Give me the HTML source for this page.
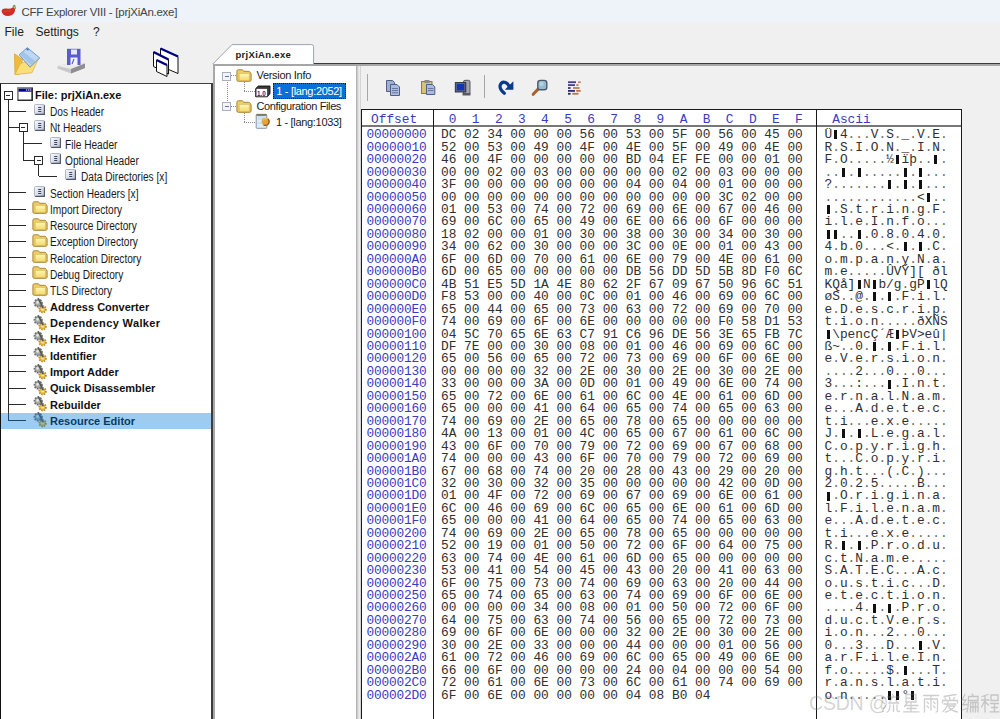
<!DOCTYPE html>
<html><head><meta charset="utf-8"><style>
*{margin:0;padding:0;box-sizing:border-box}
html,body{width:1000px;height:719px;overflow:hidden;background:#f0f0f0;position:relative;font-family:"Liberation Sans",sans-serif}
div,svg{position:absolute}
.bx{width:9px;height:9px;border:1px solid #2a2a2a;background:#fff}
.mn{left:1.5px;top:3px;width:4px;height:1px;background:#2a2a2a}
.rbx{width:9px;height:9px;border:1px solid #a8b0bc;background:#f2f4f8}
.rbx div{left:1.5px;top:3px;width:4px;height:1.2px;background:#5878a8}
.tr{font-size:12px;letter-spacing:0;transform:scaleX(0.845);transform-origin:0 0;line-height:15px;color:#1a1a1a;white-space:nowrap}
.rt{font-size:11px;line-height:15px;color:#1a1a1a;white-space:nowrap}
.tb{font-size:11.5px;font-weight:bold;transform:scaleX(0.958);transform-origin:0 0;line-height:15px;color:#111;white-space:nowrap}
.mono{font-family:"Liberation Mono",monospace;font-size:12.83px;line-height:12.46px;white-space:pre;color:#303030}
.off,.hd{color:#3a3ac4}
.off{letter-spacing:-0.2px}
.hx b{font-weight:normal;color:#6a6a6a}
.mono i{display:inline-block;width:7.7px;height:10px;position:relative;vertical-align:-1px}
.mono i:after{content:"";position:absolute;left:2px;top:0.5px;width:2.6px;height:9px;background:#000}
</style></head><body>

<svg width="0" height="0" style="position:absolute">
<defs>
<linearGradient id="gdoc" x1="0" y1="0" x2="1" y2="1"><stop offset="0" stop-color="#f8f9fd"/><stop offset="0.7" stop-color="#d0d6e4"/><stop offset="1" stop-color="#a4aec4"/></linearGradient>
<linearGradient id="gfold" x1="0" y1="0" x2="0" y2="1"><stop offset="0" stop-color="#fff8b8"/><stop offset="1" stop-color="#f2d86e"/></linearGradient>
<linearGradient id="gsel" x1="0" y1="0" x2="0" y2="1"><stop offset="0" stop-color="#a8d2f2"/><stop offset="1" stop-color="#94c4ec"/></linearGradient>
<symbol id="doc" viewBox="0 0 11 11"><rect x="0.5" y="0.5" width="10" height="10" rx="1" fill="url(#gdoc)" stroke="#a9b1c2" stroke-width="0.9"/><path d="M10.4 1.2 V10.4 H1.2" fill="none" stroke="#4e5566" stroke-width="1.1"/><rect x="4" y="3" width="3.4" height="1" rx="0.4" fill="#3e4760"/><rect x="4" y="5" width="3.4" height="1" rx="0.4" fill="#3e4760"/><rect x="4" y="7" width="3.4" height="1" rx="0.4" fill="#3e4760"/></symbol>
<symbol id="fold" viewBox="0 0 16 13"><path d="M0.9 2.3 Q0.9 0.8 2.4 0.8 H6.3 L7.9 2.3 H12.4 Q13.8 2.3 14.4 3.6 L15.1 5 V11 Q15.1 12.3 13.7 12.3 H2.3 Q0.9 12.3 0.9 11 Z" fill="#ecce6a" stroke="#a88432" stroke-width="1"/><path d="M3.2 4.4 H13.4 V11.6 H3.2 Z" fill="url(#gfold)" stroke="#caa648" stroke-width="0.5"/></symbol>
<symbol id="gear" viewBox="0 0 15 16"><circle cx="9.6" cy="11.2" r="3.3" fill="#e6c04a" stroke="#c08a22" stroke-width="1.8" stroke-dasharray="1.4 1.1"/><circle cx="9.6" cy="11.2" r="1.2" fill="#f4e8a0"/><circle cx="5.2" cy="5" r="3.7" fill="#a8a8a8" stroke="#707070" stroke-width="1.9" stroke-dasharray="1.6 1.1"/><circle cx="4.6" cy="4.4" r="1.3" fill="#e8e8e8"/><path d="M5.6 1 L10 9.8" stroke="#4e5a4e" stroke-width="1.5" stroke-linecap="round"/></symbol>
</defs></svg>
<div style="left:0;top:0;width:1000px;height:21.5px;background:#eef2f9"></div>
<svg style="left:0px;top:0px" width="18" height="18" viewBox="0 0 18 18"><path d="M1.6 11.2 Q2 8 6.5 8.6 Q10.5 9.2 13.2 7.2 Q15.6 7.8 14.8 11.2 Q13.6 15.6 8.2 15.9 Q2.4 16 1.6 11.2 Z" fill="#d02a22"/><path d="M3 12 Q7 10.5 12 11" stroke="#e84a3a" stroke-width="1.2" fill="none" opacity="0.6"/><path d="M13 7.6 Q13.2 5.6 14.6 5.4 Q15.4 6.5 15.2 9" stroke="#6a9040" stroke-width="1.1" fill="none"/></svg>
<div style="left:21.5px;top:5.6px;font-size:11.5px;letter-spacing:-0.26px;color:#444;white-space:nowrap">CFF Explorer VIII - [prjXiAn.exe]</div>
<div style="left:4.5px;top:24.5px;font-size:12px;color:#222;white-space:nowrap">File</div>
<div style="left:35.5px;top:24.5px;font-size:12px;color:#222;white-space:nowrap">Settings</div>
<div style="left:93px;top:24.5px;font-size:12px;color:#222;white-space:nowrap">?</div>

<!-- open folder -->
<svg style="left:10px;top:44px" width="34" height="34" viewBox="10 44 34 34">
<path d="M14.5 53.8 L22.5 59.5 L19 74.5 L15 74.5 Z" fill="#eebb40" stroke="#d8a430" stroke-width="0.8"/>
<path d="M15 74.5 L20.5 63.5 L38.5 58.2 L32 72.8 Z" fill="#fbe07a" stroke="#dcb448" stroke-width="0.8"/>
<path d="M27.3 47.6 L39.8 58 L30 67.2 L19.2 54.8 Z" fill="#b4d4f6" fill-opacity="0.85" stroke="#6f8fb8" stroke-width="0.9"/>
<path d="M23 51.5 L35.5 61.5 L31.5 65 L20.5 55 Z" fill="#94bcea" fill-opacity="0.7"/>
<path d="M26.5 48.5 L28.5 50.2" stroke="#3a70c0" stroke-width="1.6"/>
</svg>
<!-- save -->
<svg style="left:54px;top:44px" width="36" height="34" viewBox="54 44 36 34">
<path d="M57.5 66 L70 63 L85 63.5 L85 68 L71 73.5 L57.5 68.5 Z" fill="#c9c9c9"/>
<path d="M57.5 66 L70 63 L85 63.5 L71 69 Z" fill="#ececec"/>
<path d="M71 69 L85 63.5 L85 68 L71 73.5 Z" fill="#8f8f8f"/>
<rect x="67" y="48.8" width="13.5" height="16.2" fill="#5b5bd0"/>
<rect x="71" y="49.5" width="6" height="5" fill="#e8e8f0"/>
<rect x="70.5" y="57.5" width="7" height="7.5" fill="#f4f4f8"/>
<path d="M72 64 L74 59" stroke="#5b5bd0" stroke-width="1.2"/>
</svg>
<!-- windows -->
<svg style="left:148px;top:44px" width="36" height="36" viewBox="148 44 36 36">
<path d="M160.5 48.5 L178 56.5 L178 73.5 L160.5 66 Z" fill="#fff" stroke="#111" stroke-width="1"/>
<path d="M160.5 48.5 L178 56.5" stroke="#000080" stroke-width="2.4"/>
<path d="M153.5 52 L168.5 59.5 L168.5 74 L153.5 66.5 Z" fill="#fff" stroke="#111" stroke-width="1"/>
<path d="M153.5 52 L168.5 59.5" stroke="#000080" stroke-width="2.4"/>
<path d="M156.5 60 L167 65 L167 76.5 L156.5 71.5 Z" fill="#fff" stroke="#111" stroke-width="1"/>
<path d="M156.5 60 L167 65" stroke="#000080" stroke-width="2.4"/>
</svg>

<!-- left tree panel -->
<div style="left:0;top:82.7px;width:213px;height:637px;background:#fff;border-top:1.5px solid #404040;border-left:1.2px solid #111;border-right:2px solid #3c3c3c"></div>
<div style="left:7.699999999999999px;top:99.1px;width:1px;height:322.1px;background:#2a2a2a"></div>
<div style="left:8.2px;top:110.88px;width:17.8px;height:1px;background:#2a2a2a"></div>
<div style="left:8.2px;top:127.16px;width:17.8px;height:1px;background:#2a2a2a"></div>
<div style="left:23px;top:143.44px;width:19px;height:1px;background:#2a2a2a"></div>
<div style="left:23px;top:159.72px;width:19px;height:1px;background:#2a2a2a"></div>
<div style="left:38.5px;top:176.0px;width:18.5px;height:1px;background:#2a2a2a"></div>
<div style="left:8.2px;top:192.28px;width:17.8px;height:1px;background:#2a2a2a"></div>
<div style="left:8.2px;top:208.56px;width:17.8px;height:1px;background:#2a2a2a"></div>
<div style="left:8.2px;top:224.84px;width:17.8px;height:1px;background:#2a2a2a"></div>
<div style="left:8.2px;top:241.12px;width:17.8px;height:1px;background:#2a2a2a"></div>
<div style="left:8.2px;top:257.4px;width:17.8px;height:1px;background:#2a2a2a"></div>
<div style="left:8.2px;top:273.68px;width:17.8px;height:1px;background:#2a2a2a"></div>
<div style="left:8.2px;top:289.96000000000004px;width:17.8px;height:1px;background:#2a2a2a"></div>
<div style="left:8.2px;top:306.24px;width:17.8px;height:1px;background:#2a2a2a"></div>
<div style="left:8.2px;top:322.52px;width:17.8px;height:1px;background:#2a2a2a"></div>
<div style="left:8.2px;top:338.8px;width:17.8px;height:1px;background:#2a2a2a"></div>
<div style="left:8.2px;top:355.08000000000004px;width:17.8px;height:1px;background:#2a2a2a"></div>
<div style="left:8.2px;top:371.36px;width:17.8px;height:1px;background:#2a2a2a"></div>
<div style="left:8.2px;top:387.64px;width:17.8px;height:1px;background:#2a2a2a"></div>
<div style="left:8.2px;top:403.9200000000001px;width:17.8px;height:1px;background:#2a2a2a"></div>
<div style="left:8.2px;top:420.20000000000005px;width:17.8px;height:1px;background:#2a2a2a"></div>
<div style="left:22.5px;top:131.66px;width:1px;height:28.560000000000002px;background:#2a2a2a"></div>
<div style="left:38.0px;top:164.22px;width:1px;height:12.280000000000001px;background:#2a2a2a"></div>
<div class="bx" style="left:3.6999999999999993px;top:90.6px"><div class="mn"></div></div>
<div class="bx" style="left:18.5px;top:123.16px"><div class="mn"></div></div>
<div class="bx" style="left:34.0px;top:155.72px"><div class="mn"></div></div>
<svg style="left:17px;top:87.1px" width="16" height="14" viewBox="0 0 16 14"><rect x="0" y="0" width="16" height="14" rx="0.8" fill="#8a8a8a"/><path d="M15.2 0.8 V13.2 H0.8" fill="none" stroke="#2e2e2e" stroke-width="1.6"/><rect x="1.6" y="1.8" width="12.6" height="2.6" fill="#00008e"/><circle cx="9.6" cy="3.1" r="0.75" fill="#c8d0ff"/><circle cx="11.6" cy="3.1" r="0.75" fill="#c8d0ff"/><circle cx="13.4" cy="3.1" r="0.75" fill="#c8d0ff"/><rect x="1.8" y="5" width="12.4" height="7.4" fill="#fff"/></svg>
<div class="tb" style="left:35px;top:88.19999999999999px">File: prjXiAn.exe</div>
<svg style="left:34px;top:104.17999999999999px" width="11" height="11"><use href="#doc" width="11" height="11"/></svg>
<div class="tr" style="left:50px;top:105.17999999999999px">Dos Header</div>
<svg style="left:34px;top:120.46px" width="11" height="11"><use href="#doc" width="11" height="11"/></svg>
<div class="tr" style="left:50px;top:121.46px">Nt Headers</div>
<svg style="left:50px;top:136.74px" width="11" height="11"><use href="#doc" width="11" height="11"/></svg>
<div class="tr" style="left:65px;top:137.74px">File Header</div>
<svg style="left:50px;top:153.02px" width="11" height="11"><use href="#doc" width="11" height="11"/></svg>
<div class="tr" style="left:65px;top:154.02px">Optional Header</div>
<svg style="left:65px;top:169.3px" width="11" height="11"><use href="#doc" width="11" height="11"/></svg>
<div class="tr" style="left:81px;top:170.3px">Data Directories [x]</div>
<svg style="left:34px;top:185.58px" width="11" height="11"><use href="#doc" width="11" height="11"/></svg>
<div class="tr" style="left:50px;top:186.58px">Section Headers [x]</div>
<svg style="left:32.2px;top:201.26px" width="16" height="13"><use href="#fold" width="16" height="13"/></svg>
<div class="tr" style="left:50px;top:202.86px">Import Directory</div>
<svg style="left:32.2px;top:217.54px" width="16" height="13"><use href="#fold" width="16" height="13"/></svg>
<div class="tr" style="left:50px;top:219.14000000000001px">Resource Directory</div>
<svg style="left:32.2px;top:233.82px" width="16" height="13"><use href="#fold" width="16" height="13"/></svg>
<div class="tr" style="left:50px;top:235.42000000000002px">Exception Directory</div>
<svg style="left:32.2px;top:250.09999999999997px" width="16" height="13"><use href="#fold" width="16" height="13"/></svg>
<div class="tr" style="left:50px;top:251.7px">Relocation Directory</div>
<svg style="left:32.2px;top:266.38px" width="16" height="13"><use href="#fold" width="16" height="13"/></svg>
<div class="tr" style="left:50px;top:267.98px">Debug Directory</div>
<svg style="left:32.2px;top:282.66px" width="16" height="13"><use href="#fold" width="16" height="13"/></svg>
<div class="tr" style="left:50px;top:284.26000000000005px">TLS Directory</div>
<svg style="left:32.5px;top:298.44px" width="15" height="16"><use href="#gear" width="15" height="16"/></svg>
<div class="tb" style="left:50px;top:299.84000000000003px">Address Converter</div>
<svg style="left:32.5px;top:314.71999999999997px" width="15" height="16"><use href="#gear" width="15" height="16"/></svg>
<div class="tb" style="left:50px;top:316.12px;letter-spacing:0.38px">Dependency Walker</div>
<svg style="left:32.5px;top:331.0px" width="15" height="16"><use href="#gear" width="15" height="16"/></svg>
<div class="tb" style="left:50px;top:332.40000000000003px">Hex Editor</div>
<svg style="left:32.5px;top:347.28000000000003px" width="15" height="16"><use href="#gear" width="15" height="16"/></svg>
<div class="tb" style="left:50px;top:348.68000000000006px">Identifier</div>
<svg style="left:32.5px;top:363.56px" width="15" height="16"><use href="#gear" width="15" height="16"/></svg>
<div class="tb" style="left:50px;top:364.96000000000004px">Import Adder</div>
<svg style="left:32.5px;top:379.84px" width="15" height="16"><use href="#gear" width="15" height="16"/></svg>
<div class="tb" style="left:50px;top:381.24px">Quick Disassembler</div>
<svg style="left:32.5px;top:396.12000000000006px" width="15" height="16"><use href="#gear" width="15" height="16"/></svg>
<div class="tb" style="left:50px;top:397.5200000000001px">Rebuilder</div>
<svg style="left:32.5px;top:412.40000000000003px" width="15" height="16"><use href="#gear" width="15" height="16"/></svg>
<div class="tb" style="left:50px;top:413.80000000000007px">Resource Editor</div>
<div style="left:1.2px;top:412.90000000000003px;width:209.8px;height:15.8px;background:rgba(0,120,215,0.38)"></div>

<!-- tab -->
<svg style="left:212px;top:43px" width="104" height="23" viewBox="212 43 104 23"><path d="M212.8 64 L232 44.6 H311.5 Q313.6 44.6 313.6 46.7 V64" fill="#fff" stroke="#9aa4b4" stroke-width="1"/></svg>
<div style="left:235.5px;top:48.5px;font-size:9.5px;font-weight:bold;letter-spacing:0.3px;color:#1a1a1a;white-space:nowrap">prjXiAn.exe</div>
<div style="left:313.5px;top:63px;width:687px;height:1px;background:#3a3a3a"></div>
<div style="left:213px;top:64.3px;width:787px;height:2.2px;background:#a6a6a6"></div>

<!-- resource tree panel -->
<div style="left:213px;top:66px;width:143px;height:653px;background:#fff;border-left:2px solid #a8a8a8"></div>
<div style="left:355.8px;top:66px;width:5px;height:653px;background:linear-gradient(90deg,#a4a4a4,#dcdcdc 40%,#ececec 70%,#c8c8c8)"></div>

<div style="left:226.5px;top:80px;width:0;height:22.5px;border-left:1px dotted #8a8a8a"></div>
<div style="left:231px;top:75px;width:5px;height:0;border-top:1px dotted #8a8a8a"></div>
<div style="left:231px;top:106px;width:5px;height:0;border-top:1px dotted #8a8a8a"></div>
<div style="left:244px;top:82px;width:0;height:9px;border-left:1px dotted #8a8a8a"></div>
<div style="left:244px;top:91px;width:11px;height:0;border-top:1px dotted #8a8a8a"></div>
<div style="left:244px;top:113px;width:0;height:9px;border-left:1px dotted #8a8a8a"></div>
<div style="left:244px;top:122px;width:11px;height:0;border-top:1px dotted #8a8a8a"></div>
<div class="rbx" style="left:222px;top:71.5px"><div></div></div>
<div class="rbx" style="left:222px;top:102px"><div></div></div>
<svg style="left:236px;top:69px" width="16" height="13"><use href="#fold" width="16" height="13"/></svg>
<svg style="left:236px;top:99.5px" width="16" height="13"><use href="#fold" width="16" height="13"/></svg>
<div class="rt" style="left:256.5px;top:68px;letter-spacing:-0.3px">Version Info</div>
<div class="rt" style="left:256.5px;top:99px;letter-spacing:-0.38px">Configuration Files</div>
<svg style="left:255px;top:85px" width="16" height="13" viewBox="0 0 16 13"><path d="M0.7 3.6 L3.3 1 H15 V8.6 L12.4 11.8 H0.7 Z" fill="#3a3a3a" stroke="#111" stroke-width="0.9"/><rect x="1.5" y="3.9" width="10.6" height="7.3" fill="#fff"/><text x="2" y="10.5" font-family="Liberation Sans" font-size="6.3" font-weight="bold" fill="#1a2a9a">1.0</text></svg>
<div style="left:273px;top:83.3px;width:72.7px;height:15.3px;background:#0b6fd5;border:1px dotted #1a1a40"></div>
<div class="rt" style="left:276.3px;top:84px;color:#fff;letter-spacing:-0.32px">1 - [lang:2052]</div>
<svg style="left:255px;top:113px" width="16" height="17" viewBox="0 0 16 17"><rect x="1.2" y="1.3" width="10.6" height="14" rx="0.8" fill="#dcecf8" stroke="#8a94a2" stroke-width="1"/><rect x="1.5" y="1.3" width="10" height="1.5" fill="#6a6a50"/><path d="M2.5 4 H10 M2.5 6 H8 M2.5 10 H8" stroke="#b8d0e4" stroke-width="0.8"/><circle cx="10.6" cy="8.6" r="3.9" fill="#e6a23c"/><path d="M13.2 5.8 Q15.4 9.5 12.4 11.8 Q10.6 13 8.5 12" stroke="#8a5a20" stroke-width="1.3" fill="none"/><path d="M8.2 7.2 Q9.5 5.5 11.5 5.6" stroke="#f6d08a" stroke-width="1" fill="none"/></svg>
<div class="rt" style="left:276px;top:115px;letter-spacing:-0.32px">1 - [lang:1033]</div>


<!-- hex panel -->

<div style="left:366.5px;top:74px;width:1px;height:27px;background:#a6a6a6"></div>
<div style="left:484px;top:75px;width:1px;height:23px;background:#a6a6a6"></div>
<!-- copy -->
<svg style="left:384px;top:78px" width="18" height="20" viewBox="384 78 18 20">
<path d="M386.5 80.5 H392.5 L394.5 82.5 V91.5 H386.5 Z" fill="#9db0d4" stroke="#4f5f88"/>
<path d="M390.5 84.5 H397 L399.5 87 V95.5 H390.5 Z" fill="#a9bbde" stroke="#4f5f88"/>
<rect x="392" y="88" width="6" height="0.8" fill="#5a6a90"/><rect x="392" y="90.2" width="6" height="0.8" fill="#5a6a90"/><rect x="392" y="92.4" width="6" height="0.8" fill="#5a6a90"/>
</svg>
<!-- paste -->
<svg style="left:419px;top:78px" width="18" height="20" viewBox="419 78 18 20">
<rect x="421.5" y="81.5" width="10.5" height="12" fill="#d8c470" stroke="#8e7e38"/>
<rect x="424.5" y="80" width="5" height="3" fill="#8a8a8a"/>
<path d="M426.5 84.5 H432.5 L434.8 86.8 V94.5 H426.5 Z" fill="#a9bbde" stroke="#4f5f88"/>
<rect x="428" y="88" width="5.5" height="0.8" fill="#5a6a90"/><rect x="428" y="90.2" width="5.5" height="0.8" fill="#5a6a90"/>
</svg>
<!-- monitor -->
<svg style="left:453px;top:78px" width="20" height="20" viewBox="453 78 20 20">
<path d="M463.5 81.8 Q463.5 80.3 465 80.3 H468.5 Q470 80.3 470 81.8 V93.5 H463.5 Z" fill="#a4a4b0" stroke="#4a4a56" stroke-width="0.9"/>
<rect x="462.5" y="93" width="8" height="2.6" rx="0.6" fill="#5a5a66"/>
<rect x="455.3" y="82.6" width="10.5" height="9.4" fill="#6a6a78" stroke="#262630" stroke-width="0.9"/>
<rect x="456.8" y="84" width="7.5" height="6.4" fill="#1434b8"/>
</svg>
<!-- redo -->
<svg style="left:494px;top:76px" width="24" height="22" viewBox="494 76 24 22">
<path d="M504.3 93.2 Q499.2 89 500.2 85.2 Q501.8 81.2 505.5 82.5 Q508 83.5 509.5 87" fill="none" stroke="#0b3a8a" stroke-width="3.2" stroke-linecap="round"/>
<path d="M513.4 81.2 L513.4 89.8 L504.8 89.8 Z" fill="#0b3a8a"/>
</svg>
<!-- magnifier -->
<svg style="left:530px;top:78px" width="20" height="20" viewBox="530 78 20 20">
<path d="M533.2 94.3 L538.6 88.6" stroke="#a8622e" stroke-width="3" stroke-linecap="round"/>
<rect x="537.8" y="80.4" width="9" height="9.4" rx="2.6" fill="#94bccc" stroke="#4a5a70" stroke-width="1.4"/>
<rect x="539.5" y="82" width="4" height="4" rx="1.5" fill="#b4d4dc"/>
</svg>
<!-- list -->
<svg style="left:566px;top:79px" width="18" height="17" viewBox="566 79 18 17">
<rect x="568" y="81.3" width="8" height="1.8" fill="#46408e"/><rect x="578" y="81.3" width="2.8" height="1.8" fill="#c08a70"/>
<rect x="568" y="84.2" width="7" height="1.8" fill="#46408e"/><rect x="576.3" y="84.2" width="2.2" height="1.8" fill="#c07858"/>
<rect x="568" y="87.1" width="2.6" height="1.8" fill="#3a3478"/><rect x="573" y="87.1" width="6.6" height="1.8" fill="#b88060"/>
<rect x="568" y="90" width="7" height="1.8" fill="#2e2a80"/><rect x="576.2" y="90" width="4.5" height="1.8" fill="#d07040"/>
<rect x="568" y="92.9" width="2.6" height="1.8" fill="#2a2a60"/><rect x="572.3" y="92.9" width="6.2" height="1.8" fill="#b07850"/>
</svg>

<div style="left:361px;top:108.8px;width:601px;height:611px;background:#fff;border:1.2px solid #1a1a1a;border-bottom:none"></div>
<div style="left:362px;top:125px;width:599px;height:1.6px;background:#777"></div>
<div style="left:432.8px;top:110px;width:1.3px;height:609px;background:#1a1a1a"></div>
<div style="left:816px;top:110px;width:1.3px;height:609px;background:#1a1a1a"></div>
<div class="mono off" style="left:366.5px;top:129.26999999999998px">00000000
00000010
00000020
00000030
00000040
00000050
00000060
00000070
00000080
00000090
000000A0
000000B0
000000C0
000000D0
000000E0
000000F0
00000100
00000110
00000120
00000130
00000140
00000150
00000160
00000170
00000180
00000190
000001A0
000001B0
000001C0
000001D0
000001E0
000001F0
00000200
00000210
00000220
00000230
00000240
00000250
00000260
00000270
00000280
00000290
000002A0
000002B0
000002C0
000002D0</div>
<div class="mono hx" style="left:441px;top:129.26999999999998px">DC 02 34 00 00 00 56 00 53 00 5F 00 56 00 45 00
52 00 53 00 49 00 4F 00 4E 00 5F 00 49 00 4E 00
46 00 4F 00 00 00 00 00 BD 04 EF FE 00 00 01 00
00 00 02 00 03 00 00 00 00 00 02 00 03 00 00 00
3F 00 00 00 00 00 00 00 04 00 04 00 01 00 00 00
00 00 00 00 00 00 00 00 00 00 00 00 3C 02 00 00
01 00 53 00 74 00 72 00 69 00 6E 00 67 00 46 00
69 00 6C 00 65 00 49 00 6E 00 66 00 6F 00 00 00
18 02 00 00 01 00 30 00 38 00 30 00 34 00 30 00
34 00 62 00 30 00 00 00 3C 00 0E 00 01 00 43 00
6F 00 6D 00 70 00 61 00 6E 00 79 00 4E 00 61 00
6D 00 65 00 00 00 00 00 DB 56 DD 5D 5B 8D F0 6C
4B 51 E5 5D 1A 4E 80 62 2F 67 09 67 50 96 6C 51
F8 53 00 00 40 00 0C 00 01 00 46 00 69 00 6C 00
65 00 44 00 65 00 73 00 63 00 72 00 69 00 70 00
74 00 69 00 6F 00 6E 00 00 00 00 00 F0 58 D1 53
04 5C 70 65 6E 63 C7 91 C6 96 DE 56 3E 65 FB 7C
DF 7E 00 00 30 00 08 00 01 00 46 00 69 00 6C 00
65 00 56 00 65 00 72 00 73 00 69 00 6F 00 6E 00
00 00 00 00 32 00 2E 00 30 00 2E 00 30 00 2E 00
33 00 00 00 3A 00 0D 00 01 00 49 00 6E 00 74 00
65 00 72 00 6E 00 61 00 6C 00 4E 00 61 00 6D 00
65 00 00 00 41 00 64 00 65 00 74 00 65 00 63 00
74 00 69 00 2E 00 65 00 78 00 65 00 00 00 00 00
4A 00 13 00 01 00 4C 00 65 00 67 00 61 00 6C 00
43 00 6F 00 70 00 79 00 72 00 69 00 67 00 68 00
74 00 00 00 43 00 6F 00 70 00 79 00 72 00 69 00
67 00 68 00 74 00 20 00 28 00 43 00 29 00 20 00
32 00 30 00 32 00 35 00 00 00 00 00 42 00 0D 00
01 00 4F 00 72 00 69 00 67 00 69 00 6E 00 61 00
6C 00 46 00 69 00 6C 00 65 00 6E 00 61 00 6D 00
65 00 00 00 41 00 64 00 65 00 74 00 65 00 63 00
74 00 69 00 2E 00 65 00 78 00 65 00 00 00 00 00
52 00 19 00 01 00 50 00 72 00 6F 00 64 00 75 00
63 00 74 00 4E 00 61 00 6D 00 65 00 00 00 00 00
53 00 41 00 54 00 45 00 43 00 20 00 41 00 63 00
6F 00 75 00 73 00 74 00 69 00 63 00 20 00 44 00
65 00 74 00 65 00 63 00 74 00 69 00 6F 00 6E 00
00 00 00 00 34 00 08 00 01 00 50 00 72 00 6F 00
64 00 75 00 63 00 74 00 56 00 65 00 72 00 73 00
69 00 6F 00 6E 00 00 00 32 00 2E 00 30 00 2E 00
30 00 2E 00 33 00 00 00 44 00 00 00 01 00 56 00
61 00 72 00 46 00 69 00 6C 00 65 00 49 00 6E 00
66 00 6F 00 00 00 00 00 24 00 04 00 00 00 54 00
72 00 61 00 6E 00 73 00 6C 00 61 00 74 00 69 00
6F 00 6E 00 00 00 00 00 04 08 B0 04</div>
<div class="mono hx" style="left:824.5px;top:129.26999999999998px">Ü 4<b>.</b><b>.</b><b>.</b>V<b>.</b>S<b>.</b>_<b>.</b>V<b>.</b>E<b>.</b>
R<b>.</b>S<b>.</b>I<b>.</b>O<b>.</b>N<b>.</b>_<b>.</b>I<b>.</b>N<b>.</b>
F<b>.</b>O<b>.</b><b>.</b><b>.</b><b>.</b><b>.</b>½ ïþ<b>.</b><b>.</b> <b>.</b>
<b>.</b><b>.</b> <b>.</b> <b>.</b><b>.</b><b>.</b><b>.</b><b>.</b> <b>.</b> <b>.</b><b>.</b><b>.</b>
?<b>.</b><b>.</b><b>.</b><b>.</b><b>.</b><b>.</b><b>.</b> <b>.</b> <b>.</b> <b>.</b><b>.</b><b>.</b>
<b>.</b><b>.</b><b>.</b><b>.</b><b>.</b><b>.</b><b>.</b><b>.</b><b>.</b><b>.</b><b>.</b><b>.</b>&lt; <b>.</b><b>.</b>
 <b>.</b>S<b>.</b>t<b>.</b>r<b>.</b>i<b>.</b>n<b>.</b>g<b>.</b>F<b>.</b>
i<b>.</b>l<b>.</b>e<b>.</b>I<b>.</b>n<b>.</b>f<b>.</b>o<b>.</b><b>.</b><b>.</b>
  <b>.</b><b>.</b> <b>.</b>0<b>.</b>8<b>.</b>0<b>.</b>4<b>.</b>0<b>.</b>
4<b>.</b>b<b>.</b>0<b>.</b><b>.</b><b>.</b>&lt;<b>.</b> <b>.</b> <b>.</b>C<b>.</b>
o<b>.</b>m<b>.</b>p<b>.</b>a<b>.</b>n<b>.</b>y<b>.</b>N<b>.</b>a<b>.</b>
m<b>.</b>e<b>.</b><b>.</b><b>.</b><b>.</b><b>.</b>ÛVÝ][ ðl
KQå] N b/g<b>.</b>gP lQ
øS<b>.</b><b>.</b>@<b>.</b> <b>.</b> <b>.</b>F<b>.</b>i<b>.</b>l<b>.</b>
e<b>.</b>D<b>.</b>e<b>.</b>s<b>.</b>c<b>.</b>r<b>.</b>i<b>.</b>p<b>.</b>
t<b>.</b>i<b>.</b>o<b>.</b>n<b>.</b><b>.</b><b>.</b><b>.</b><b>.</b>ðXÑS
 \pencÇ´Æ ÞV&gt;eû|
ß~<b>.</b><b>.</b>0<b>.</b> <b>.</b> <b>.</b>F<b>.</b>i<b>.</b>l<b>.</b>
e<b>.</b>V<b>.</b>e<b>.</b>r<b>.</b>s<b>.</b>i<b>.</b>o<b>.</b>n<b>.</b>
<b>.</b><b>.</b><b>.</b><b>.</b>2<b>.</b><b>.</b><b>.</b>0<b>.</b><b>.</b><b>.</b>0<b>.</b><b>.</b><b>.</b>
3<b>.</b><b>.</b><b>.</b>:<b>.</b><b>.</b><b>.</b> <b>.</b>I<b>.</b>n<b>.</b>t<b>.</b>
e<b>.</b>r<b>.</b>n<b>.</b>a<b>.</b>l<b>.</b>N<b>.</b>a<b>.</b>m<b>.</b>
e<b>.</b><b>.</b><b>.</b>A<b>.</b>d<b>.</b>e<b>.</b>t<b>.</b>e<b>.</b>c<b>.</b>
t<b>.</b>i<b>.</b><b>.</b><b>.</b>e<b>.</b>x<b>.</b>e<b>.</b><b>.</b><b>.</b><b>.</b><b>.</b>
J<b>.</b> <b>.</b> <b>.</b>L<b>.</b>e<b>.</b>g<b>.</b>a<b>.</b>l<b>.</b>
C<b>.</b>o<b>.</b>p<b>.</b>y<b>.</b>r<b>.</b>i<b>.</b>g<b>.</b>h<b>.</b>
t<b>.</b><b>.</b><b>.</b>C<b>.</b>o<b>.</b>p<b>.</b>y<b>.</b>r<b>.</b>i<b>.</b>
g<b>.</b>h<b>.</b>t<b>.</b><b>.</b><b>.</b>(<b>.</b>C<b>.</b>)<b>.</b><b>.</b><b>.</b>
2<b>.</b>0<b>.</b>2<b>.</b>5<b>.</b><b>.</b><b>.</b><b>.</b><b>.</b>B<b>.</b><b>.</b><b>.</b>
 <b>.</b>O<b>.</b>r<b>.</b>i<b>.</b>g<b>.</b>i<b>.</b>n<b>.</b>a<b>.</b>
l<b>.</b>F<b>.</b>i<b>.</b>l<b>.</b>e<b>.</b>n<b>.</b>a<b>.</b>m<b>.</b>
e<b>.</b><b>.</b><b>.</b>A<b>.</b>d<b>.</b>e<b>.</b>t<b>.</b>e<b>.</b>c<b>.</b>
t<b>.</b>i<b>.</b><b>.</b><b>.</b>e<b>.</b>x<b>.</b>e<b>.</b><b>.</b><b>.</b><b>.</b><b>.</b>
R<b>.</b> <b>.</b> <b>.</b>P<b>.</b>r<b>.</b>o<b>.</b>d<b>.</b>u<b>.</b>
c<b>.</b>t<b>.</b>N<b>.</b>a<b>.</b>m<b>.</b>e<b>.</b><b>.</b><b>.</b><b>.</b><b>.</b>
S<b>.</b>A<b>.</b>T<b>.</b>E<b>.</b>C<b>.</b><b>.</b><b>.</b>A<b>.</b>c<b>.</b>
o<b>.</b>u<b>.</b>s<b>.</b>t<b>.</b>i<b>.</b>c<b>.</b><b>.</b><b>.</b>D<b>.</b>
e<b>.</b>t<b>.</b>e<b>.</b>c<b>.</b>t<b>.</b>i<b>.</b>o<b>.</b>n<b>.</b>
<b>.</b><b>.</b><b>.</b><b>.</b>4<b>.</b> <b>.</b> <b>.</b>P<b>.</b>r<b>.</b>o<b>.</b>
d<b>.</b>u<b>.</b>c<b>.</b>t<b>.</b>V<b>.</b>e<b>.</b>r<b>.</b>s<b>.</b>
i<b>.</b>o<b>.</b>n<b>.</b><b>.</b><b>.</b>2<b>.</b><b>.</b><b>.</b>0<b>.</b><b>.</b><b>.</b>
0<b>.</b><b>.</b><b>.</b>3<b>.</b><b>.</b><b>.</b>D<b>.</b><b>.</b><b>.</b> <b>.</b>V<b>.</b>
a<b>.</b>r<b>.</b>F<b>.</b>i<b>.</b>l<b>.</b>e<b>.</b>I<b>.</b>n<b>.</b>
f<b>.</b>o<b>.</b><b>.</b><b>.</b><b>.</b><b>.</b>$<b>.</b> <b>.</b><b>.</b><b>.</b>T<b>.</b>
r<b>.</b>a<b>.</b>n<b>.</b>s<b>.</b>l<b>.</b>a<b>.</b>t<b>.</b>i<b>.</b>
o<b>.</b>n<b>.</b><b>.</b><b>.</b><b>.</b><b>.</b>  ° </div>
<div style="left:834px;top:130px;width:3px;height:9px;background:#111"></div>
<div style="left:896px;top:155px;width:3px;height:9px;background:#111"></div>
<div style="left:934px;top:155px;width:3px;height:9px;background:#111"></div>
<div style="left:842px;top:168px;width:3px;height:9px;background:#111"></div>
<div style="left:858px;top:168px;width:3px;height:9px;background:#111"></div>
<div style="left:904px;top:168px;width:3px;height:9px;background:#111"></div>
<div style="left:919px;top:168px;width:3px;height:9px;background:#111"></div>
<div style="left:888px;top:180px;width:3px;height:9px;background:#111"></div>
<div style="left:904px;top:180px;width:3px;height:9px;background:#111"></div>
<div style="left:919px;top:180px;width:3px;height:9px;background:#111"></div>
<div style="left:927px;top:193px;width:3px;height:9px;background:#111"></div>
<div style="left:827px;top:205px;width:3px;height:9px;background:#111"></div>
<div style="left:827px;top:230px;width:3px;height:9px;background:#111"></div>
<div style="left:834px;top:230px;width:3px;height:9px;background:#111"></div>
<div style="left:858px;top:230px;width:3px;height:9px;background:#111"></div>
<div style="left:904px;top:242px;width:3px;height:9px;background:#111"></div>
<div style="left:919px;top:242px;width:3px;height:9px;background:#111"></div>
<div style="left:858px;top:280px;width:3px;height:9px;background:#111"></div>
<div style="left:873px;top:280px;width:3px;height:9px;background:#111"></div>
<div style="left:927px;top:280px;width:3px;height:9px;background:#111"></div>
<div style="left:873px;top:292px;width:3px;height:9px;background:#111"></div>
<div style="left:888px;top:292px;width:3px;height:9px;background:#111"></div>
<div style="left:827px;top:330px;width:3px;height:9px;background:#111"></div>
<div style="left:896px;top:330px;width:3px;height:9px;background:#111"></div>
<div style="left:873px;top:342px;width:3px;height:9px;background:#111"></div>
<div style="left:888px;top:342px;width:3px;height:9px;background:#111"></div>
<div style="left:888px;top:380px;width:3px;height:9px;background:#111"></div>
<div style="left:842px;top:429px;width:3px;height:9px;background:#111"></div>
<div style="left:858px;top:429px;width:3px;height:9px;background:#111"></div>
<div style="left:827px;top:492px;width:3px;height:9px;background:#111"></div>
<div style="left:842px;top:541px;width:3px;height:9px;background:#111"></div>
<div style="left:858px;top:541px;width:3px;height:9px;background:#111"></div>
<div style="left:873px;top:604px;width:3px;height:9px;background:#111"></div>
<div style="left:888px;top:604px;width:3px;height:9px;background:#111"></div>
<div style="left:919px;top:641px;width:3px;height:9px;background:#111"></div>
<div style="left:904px;top:666px;width:3px;height:9px;background:#111"></div>
<div style="left:888px;top:691px;width:3px;height:9px;background:#111"></div>
<div style="left:896px;top:691px;width:3px;height:9px;background:#111"></div>
<div style="left:911px;top:691px;width:3px;height:9px;background:#111"></div>
<div class="mono hd" style="left:441px;top:114.27px"> 0  1  2  3  4  5  6  7  8  9  A  B  C  D  E  F</div>
<div class="mono hd" style="left:371px;top:114.27px">Offset</div>
<div class="mono hd" style="left:824.5px;top:114.27px"> Ascii</div>

<div style="left:809px;top:691.5px;font-size:19.5px;color:rgba(120,120,120,0.33);white-space:nowrap;letter-spacing:-0.2px">CSDN @</div>
<svg style="left:881px;top:692px" width="120" height="22" viewBox="0 0 120 22" fill="none" stroke="rgba(120,120,120,0.36)" stroke-width="1.3" stroke-linecap="round">
<g transform="translate(0,1)"><path d="M2 4 L4 5.5 M1.5 9 L3.5 10.5 M1.5 18 L4.5 12.5 M11.5 1.5 L12.5 3 M6.5 4 H18.5 M11 5 L8 10 H17 M15 7.5 L17.5 10.5 M9 12 Q9 17 6.5 19 M12.5 12 V18.5 M16 12 V17 Q16 18.5 18.5 18.5"/></g>
<g transform="translate(20,1)"><path d="M5 1.5 H15 V9 H5 Z M5 5.2 H15 M6 10 L3.5 13.5 M5 12.5 H17 M6 15.5 H15 M2.5 18.8 H18 M10 10 V18.8"/></g>
<g transform="translate(40,1)"><path d="M2.5 2.5 H17.5 M10 2.5 V17 M3.5 6 V19 M3.5 6 H16.5 V17.5 Q16.5 19 15 19 M6 9 L7.5 10.5 M6 13 L7.5 14.5 M12.5 9 L14 10.5 M12.5 13 L14 14.5"/></g>
<g transform="translate(59,1)"><path d="M16 1.5 L4 3.5 M5 5 L6 7 M9.5 4.5 L10 6.5 M14.5 4.5 L13.5 6.5 M2.5 10 V7.5 H17.5 V10 M4 11 H16 M8 9 Q7 15 3 18.5 M8 13 H15 Q12 17.5 5.5 19 M9 14.5 Q12 18 17.5 19"/></g>
<g transform="translate(79,1)"><path d="M5 1.5 L2 7 L6 7 L2.5 12 L7 11.5 M2 17 L7 15.5 M12 1 L13 2.5 M8.5 3.5 H18 V7.5 H8.5 M8.5 3.5 Q8.5 14 7 19 M10.5 9.5 H18 V19 M10.5 9.5 V19 M13 9.5 V19 M15.5 9.5 V19 M10.5 14 H18"/></g>
<g transform="translate(99,1)"><path d="M8 1.5 L2 3.5 M1.5 7 H9 M5 3 V19 M5 7.5 L1.5 14 M5 8.5 L8.5 12 M11 2 H18 V7.5 H11 Z M10.5 10.5 H18.5 M11.5 14.5 H17.5 M10 18.8 H19 M14.5 10.5 V18.8"/></g>
</svg>

</body></html>
